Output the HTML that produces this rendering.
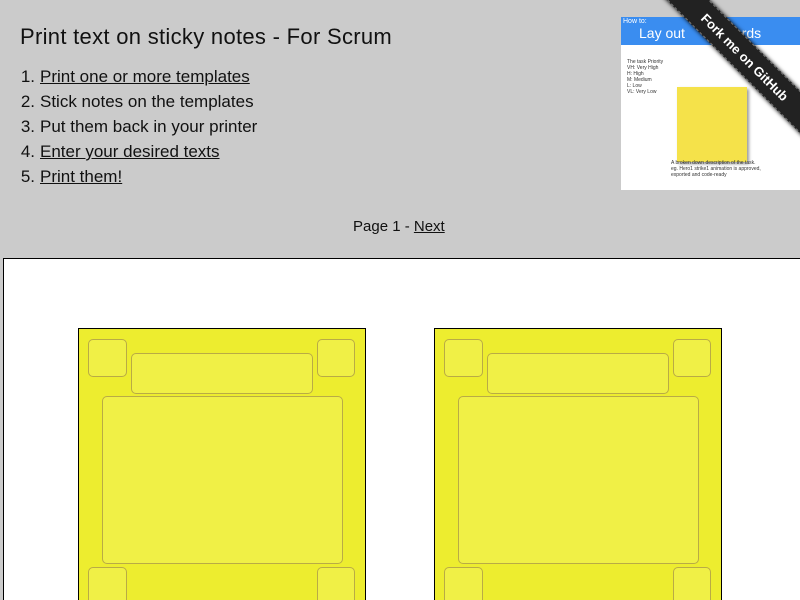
<!DOCTYPE html>
<html style="overflow:hidden;height:600px"><head><style>
body{margin:0;width:800px;height:600px;overflow:hidden;background:#cbcbcb;font-family:"Liberation Sans",sans-serif;color:#111;position:relative}
h1{position:absolute;left:20px;top:24px;margin:0;font-size:22px;font-weight:normal;letter-spacing:0.3px}
ol{position:absolute;left:40px;top:64px;margin:0;padding:0;font-size:17px;line-height:25px;list-style:none}
ol li span.n{position:absolute;left:-25px;width:20px;text-align:right}
ol li{position:relative}
a{color:#111;text-decoration:underline}
.pg{position:absolute;left:353px;top:218px;font-size:15px}
.page{position:absolute;left:3px;top:258px;width:797px;height:342px;background:#fff;border-left:1px solid #000;border-top:1px solid #000;box-sizing:border-box}
.note{position:absolute;top:328px;width:288px;height:272px;background:#eded2f;border:1px solid #000;border-bottom:none;overflow:hidden;box-sizing:border-box}
.b{position:absolute;background:#f0f046;border:1px solid #b9ab45;border-radius:5px}
.img{position:absolute;left:621px;top:17px;width:179px;height:173px;background:#fff;overflow:hidden}
.ribbon{position:absolute;left:630px;top:42px;width:230px;height:30px;background:#222;color:#fff;transform:rotate(45deg);text-align:center;font:bold 13px/30px "Liberation Sans",sans-serif;box-shadow:0 0 4px #000;border:1px dashed #777;box-sizing:border-box}
.clip{position:absolute;left:0;top:0;width:800px;height:600px;overflow:hidden}
</style></head><body><div class="clip">
<h1>Print text on sticky notes - For Scrum</h1>
<ol>
<li><span class="n">1.</span><a>Print one or more templates</a></li>
<li><span class="n">2.</span>Stick notes on the templates</li>
<li><span class="n">3.</span>Put them back in your printer</li>
<li><span class="n">4.</span><a>Enter your desired texts</a></li>
<li><span class="n">5.</span><a>Print them!</a></li>
</ol>
<div class="img">
<div style="position:absolute;left:0;top:0;width:179px;height:28px;background:#3a8df0"></div>
<div style="position:absolute;left:2px;top:1px;color:#fff;font-size:7px">How to:</div>
<div style="position:absolute;left:18px;top:8px;color:#fff;font-size:14px">Lay out &nbsp;&nbsp;&nbsp;&nbsp;&nbsp;M Cards</div>
<div style="position:absolute;left:56px;top:70px;width:70px;height:75px;background:#f5e24a;box-shadow:2px 2px 3px #999"></div>
<div style="position:absolute;left:6px;top:42px;font-size:5px;line-height:6px;color:#333">The task Priority<br>VH: Very High<br>H: High<br>M: Medium<br>L: Low<br>VL: Very Low</div>
<div style="position:absolute;left:50px;top:143px;font-size:5px;line-height:6px;color:#333">A broken down description of the task.<br>eg. Hero1 strike1 animation is approved,<br>exported and code-ready</div>
</div>
<div class="ribbon">Fork me on GitHub</div>
<div class="pg">Page 1 - <a>Next</a></div>
<div class="page"></div>
<div class="note" style="left:78px">
<div class="b" style="left:9px;top:10px;width:37px;height:36px"></div>
<div class="b" style="left:52px;top:24px;width:180px;height:39px"></div>
<div class="b" style="left:238px;top:10px;width:36px;height:36px"></div>
<div class="b" style="left:23px;top:67px;width:239px;height:166px"></div>
<div class="b" style="left:9px;top:238px;width:37px;height:60px"></div>
<div class="b" style="left:238px;top:238px;width:36px;height:60px"></div>
</div>
<div class="note" style="left:434px">
<div class="b" style="left:9px;top:10px;width:37px;height:36px"></div>
<div class="b" style="left:52px;top:24px;width:180px;height:39px"></div>
<div class="b" style="left:238px;top:10px;width:36px;height:36px"></div>
<div class="b" style="left:23px;top:67px;width:239px;height:166px"></div>
<div class="b" style="left:9px;top:238px;width:37px;height:60px"></div>
<div class="b" style="left:238px;top:238px;width:36px;height:60px"></div>
</div>
</div></body></html>
